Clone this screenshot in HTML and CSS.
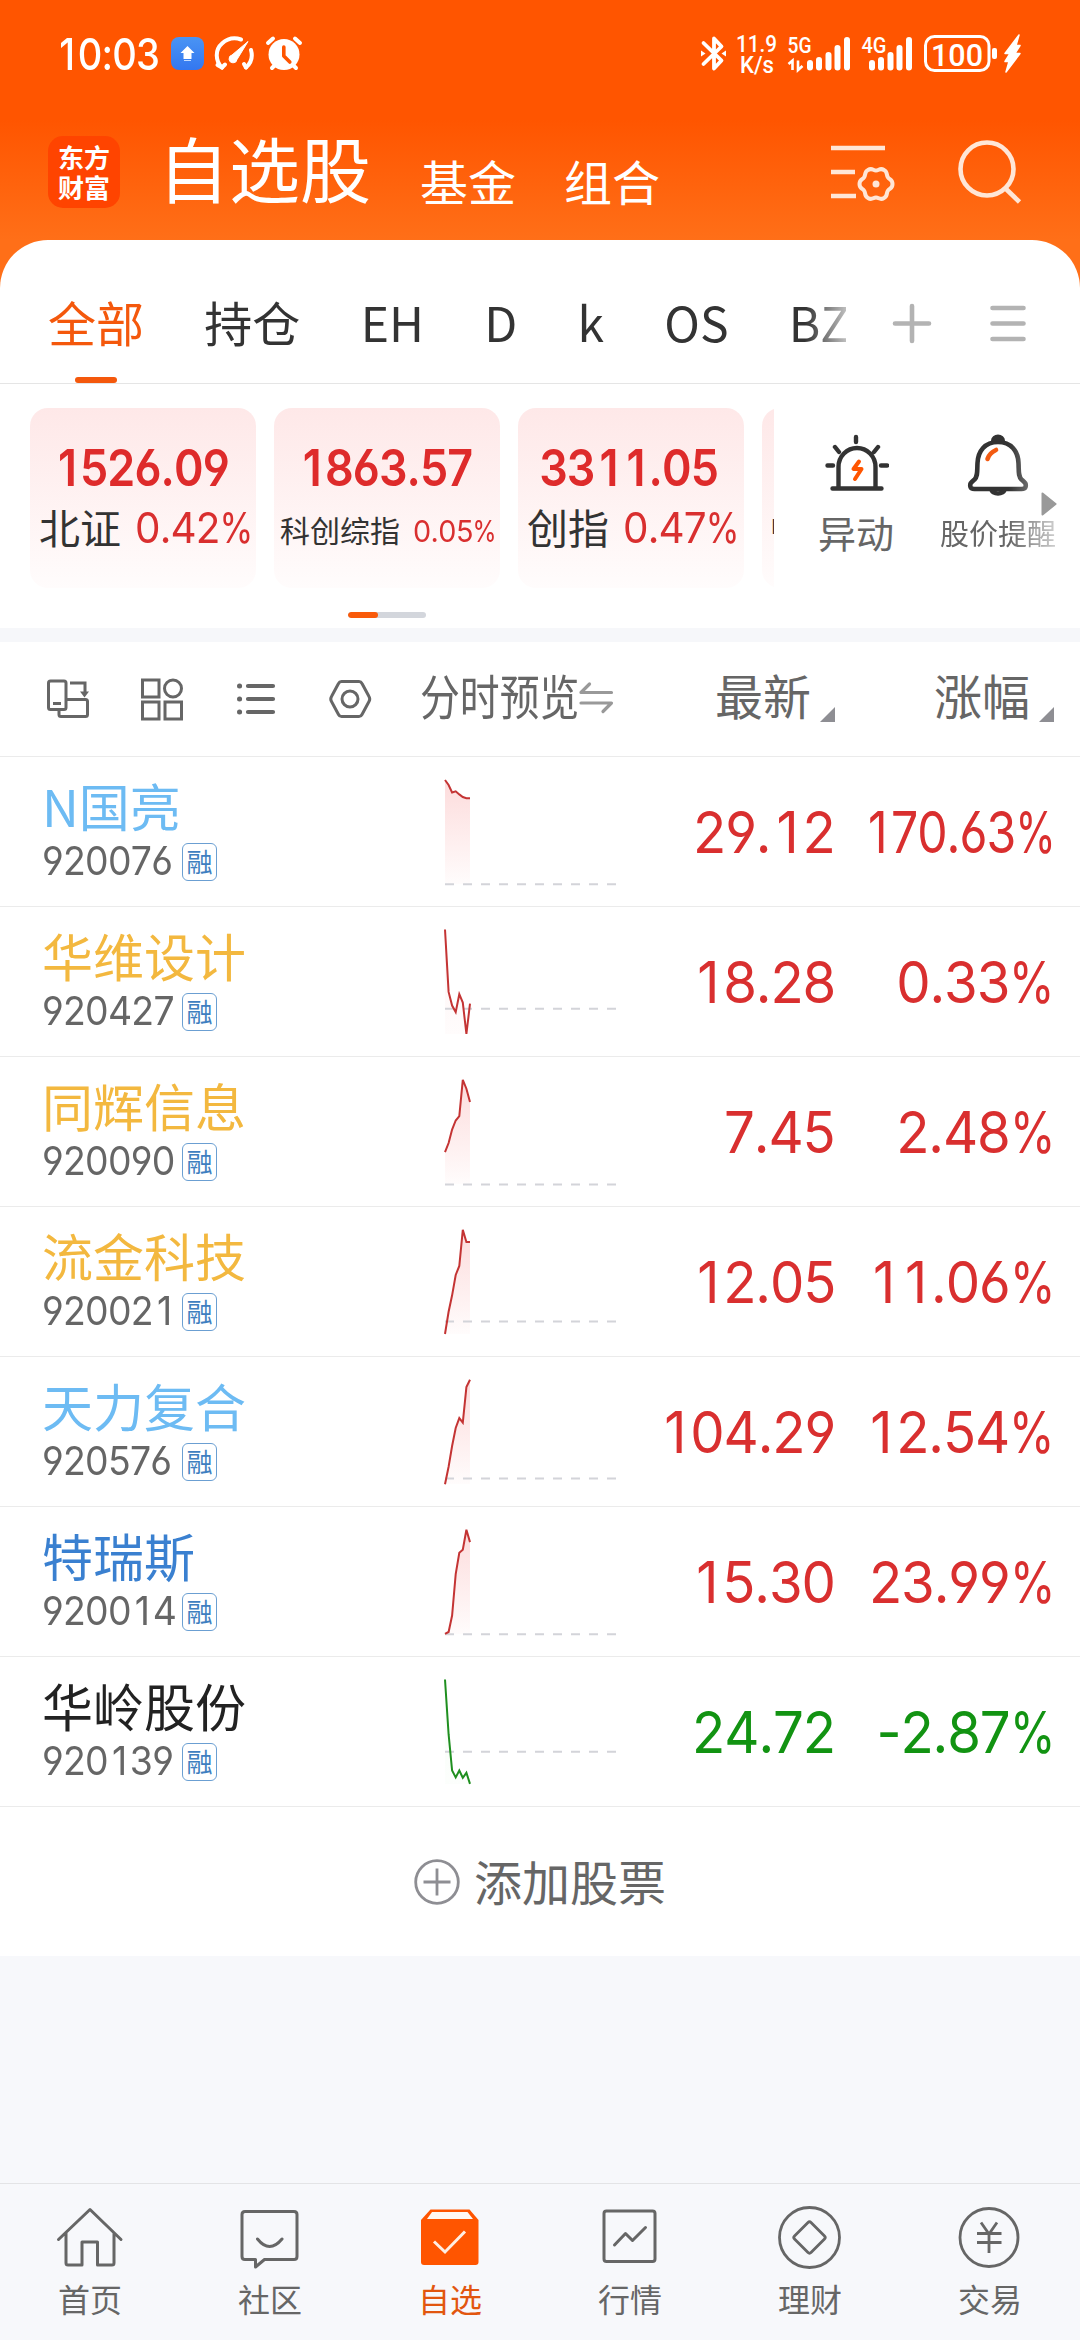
FILE: index.html
```html
<!DOCTYPE html>
<html lang="zh-CN">
<head>
<meta charset="utf-8">
<title>自选股</title>
<link rel="stylesheet" href="styles.css">
</head>
<body>
<div class="app">
  <header class="top">
    <div class="status">
      <span class="clock num">10:03</span>
      <svg class="st-left" width="134" height="38" viewBox="170 34 134 38">
        <defs><linearGradient id="blue" x1="0" y1="0" x2="0" y2="1"><stop offset="0" stop-color="#4a94f4"/><stop offset="1" stop-color="#3377f0"/></linearGradient></defs>
        <rect x="171" y="37" width="33" height="33" rx="8" fill="url(#blue)"/>
        <path d="M187.500 46l7 7h-3v6h-8v-6h-3z" fill="#fff"/><path d="M184 60.500h7" stroke="#c4dcff"/>
        <g fill="none" stroke="#fff" stroke-width="4" stroke-linecap="round"><path d="M222 67.500c-7-7-7-18 0-24 6-5.500 13-6 19-4"/><path d="M251 50c2 7 0 13-5 17.500"/><path d="M217.500 65l4.500 2.500 3-3M244 64l2 3.500"/></g>
        <path d="M248 41.500l-11 18a4 4 0 1 1-5-4.500z" fill="#fff" stroke="#fff" stroke-width="1" stroke-linejoin="round"/>
        <circle cx="284" cy="54.500" r="15.500" fill="#fff"/><path d="M268 43l5-4.500M300 43l-5-4.500M272 68l4-4M296 68l-4-4" stroke="#fff" stroke-width="4" stroke-linecap="round"/><path d="M283.800 47v9l6 6" fill="none" stroke="#ff5500" stroke-width="3.600" stroke-linecap="round" stroke-linejoin="round"/>
      </svg>
      <svg class="st-right" width="324" height="42" viewBox="700 33 324 42">
        <g fill="none" stroke="#fff" stroke-width="3.800" stroke-linecap="round" stroke-linejoin="round"><path d="M703.500 43l18 17.500-7.500 8V38.500l7.500 8-18 17.500"/></g><path d="M701 50.500l4.500 3-4.500 3zM726 50.500l-4.500 3 4.500 3z" fill="#fff"/>
        <g fill="#fff" class="st-text"><text x="736" y="52" font-size="23.500" textLength="41" lengthAdjust="spacingAndGlyphs">11.9</text><text x="740" y="73" font-size="23" textLength="34" lengthAdjust="spacingAndGlyphs">K/s</text><text x="787.500" y="53" font-size="22.500" textLength="24" lengthAdjust="spacingAndGlyphs">5G</text><text x="861.500" y="53" font-size="22.500" textLength="25" lengthAdjust="spacingAndGlyphs">4G</text><text x="931" y="65.500" font-size="32" textLength="52" lengthAdjust="spacingAndGlyphs">100</text></g>
        <path d="M788.500 64l4-3.500V70M798 60.500V70l4.500-4" fill="none" stroke="#fff" stroke-width="2.600"/>
        <g stroke="#fff" stroke-width="6" stroke-linecap="round"><path d="M810 63v4.500M819 60v7.500M828.500 55v12.500M837.500 48v19.500M847 40v27.500M872 63v4.500M881 60v7.500M890.500 55v12.500M899.500 48v19.500M909 40v27.500"/></g>
        <rect x="925.500" y="36.500" width="63.500" height="34" rx="9" fill="none" stroke="#fff" stroke-width="3"/><rect x="992" y="48" width="5" height="11" rx="2" fill="#fff"/>
        <path d="M1019 35l-14 18.500h5l-5 8h4l-3 10.500 14-18.500h-5l5-8h-4z" fill="#fff" stroke="#fff" stroke-width="1.500" stroke-linejoin="round"/>
      </svg>
    </div>
    <nav class="brand">
      <span class="logo"><b>东方</b><b>财富</b></span>
      <span class="h-main">自选股</span><span class="h-sub">基金</span><span class="h-sub">组合</span>
      <svg class="h-icons" width="192" height="70" viewBox="831 138 192 70" fill="none" stroke="#ffe6d6" stroke-width="4.600">
        <path d="M831 148h54M831 172h24M831 196h25"/>
        <path d="M876 170.500 C879 170.500 880 167.500 884 170 C888 172 886 175 888 177.500 C889.500 180 892.500 179 892.500 184 C892.500 189 889.500 188 888 190.500 C886 193 888 196 884 198 C880 200.500 879 197.500 876 197.500 C873 197.500 872 200.500 868 198 C864 196 866 193 864 190.500 C862.500 188 859.500 189 859.500 184 C859.500 179 862.500 180 864 177.500 C866 175 864 172 868 170 C872 167.500 873 170.500 876 170.500Z" stroke-width="4"/><circle cx="876" cy="184" r="3.500" fill="#ffe6d6" stroke="none"/>
        <circle cx="987" cy="169" r="26.500"/><path d="M1005 188l14.500 14"/>
      </svg>
    </nav>
  </header>

  <main class="panel">
    <div class="tabs">
      <div class="tab-list"><span class="tab on">全部</span><span class="tab">持仓</span><span class="tab">EH</span><span class="tab">D</span><span class="tab">k</span><span class="tab">OS</span><span class="tab last">BZ</span></div>
      <svg class="tab-tools" width="136" height="44" viewBox="892 302 136 44" fill="none" stroke="#b3b3b3" stroke-width="4.600" stroke-linecap="round"><path d="M895 323.500h34M912 306v35M992.500 308h31M992.500 323.500h31M992.500 339h31"/></svg>
    </div>

    <div class="quick">
      <div class="cards">
        <div class="card"><div class="val"><span class="num">1526.09</span></div><div class="lab"><span>北证</span><span class="num pct">0.42%</span></div></div>
        <div class="card"><div class="val"><span class="num">1863.57</span></div><div class="lab small"><span>科创综指</span><span class="num pct">0.05%</span></div></div>
        <div class="card"><div class="val"><span class="num">3311.05</span></div><div class="lab"><span>创指</span><span class="num pct">0.47%</span></div></div>
        <div class="card"><div class="val"></div><div class="lab tiny"><span>中证</span></div></div>
      </div>
      <div class="acts">
        <div class="act">
          <svg width="66" height="62" viewBox="822 434 66 62" fill="none" stroke="#333" stroke-width="4.400" stroke-linecap="round"><path d="M837.500 488v-21a18.500 19 0 0 1 37 0v21M831.500 488.500h49M855 437v5M834 447l4 5M877 447l-4 5M826.500 465.500h5.500M880 465.500h6" /><path d="M858 461.500l-5.500 7.500h8l-6.500 10" stroke="#ff5500" stroke-linejoin="round" stroke-width="4"/></svg>
          <span>异动</span>
        </div>
        <div class="act remind">
          <svg width="66" height="62" viewBox="964 434 66 62" fill="none" stroke="#333" stroke-width="4.600" stroke-linejoin="round"><path d="M997 442c-13 0-20 9-20.500 21-.5 8 .5 13-3 16.500-3.500 3-5 4-4 7.500.5 2 2 2 4 2h47c2 0 3.500 0 4-2 1-3.500-.5-4.500-4-7.500-3.500-3.500-2.500-8.500-3-16.500-.500-12-7.500-21-20.500-21z"/><path d="M991 440.500a6 5 0 0 1 12 0z" fill="#333" stroke-width="2"/><path d="M990.500 489c0 6 13 6 13 0"/><path d="M986.500 459c1.500-5 4-7 8.500-9" stroke="#f35b12" stroke-linecap="round"/></svg>
          <span>股价提醒</span>
        </div>
        <svg class="more" width="16" height="26" viewBox="0 0 16 26"><path d="M1.500 2.500v21l13-10.500z" fill="#999" stroke="#999" stroke-width="2" stroke-linejoin="round"/></svg>
      </div>
    </div>
    <div class="pager"><i></i></div>

    <div class="thead">
      <svg class="tools" width="330" height="46" viewBox="44 676 330 46" fill="none" stroke="#666" stroke-width="3">
        <rect x="48.500" y="681" width="17.500" height="28.500" rx="2"/><path d="M53 703.500h8M70 683h15v9M67 699.500h18.500q2 0 2 2v13q0 2-2 2H61q-2 0-2-2v-4"/><path d="M80 691.500h9l-4.500 6z" fill="#666" stroke="none"/>
        <rect x="142.500" y="680" width="16.500" height="17"/><ellipse cx="173" cy="688.500" rx="8.500" ry="8.500"/><rect x="142.500" y="702" width="16.500" height="17"/><rect x="165" y="702" width="16.500" height="17"/>
        <path d="M248 686h25M248 699h25M248 712h25" stroke-width="4.200" stroke-linecap="round"/><path d="M239.500 686h.1M239.500 699h.1M239.500 712h.1" stroke-width="5" stroke-linecap="round"/>
        <path d="M341.500 681.500h17.500q2 0 3 2l7 13q1.500 2.500 0 5l-7 13q-1 2-3 2h-17.500q-2 0-3-2l-7-13q-1.500-2.500 0-5l7-13q1-2 3-2z"/><circle cx="350" cy="699" r="8"/>
      </svg>
      <span class="th-preview">分时预览</span>
      <svg class="swap" width="36" height="34" viewBox="578 681 36 34" fill="none" stroke="#999" stroke-width="3.200" stroke-linecap="round" stroke-linejoin="round"><path d="M611.500 692.500H581l8.500-8.500M581 703h30.500l-8.500 8.500"/></svg>
      <span class="th th-price">最新<i></i></span>
      <span class="th th-pct">涨幅<i></i></span>
    </div>

    <div class="rows" id="rows"></div>

    <div class="add">
      <svg width="46" height="46" viewBox="0 0 46 46" fill="none" stroke="#8e8e93" stroke-width="2.800"><circle cx="23" cy="23" r="21.300"/><path d="M9.500 23h27M23 9.500v27"/></svg>
      <span>添加股票</span>
    </div>
  </main>

  <footer class="nav">
    <a><svg width="68" height="64" viewBox="56 2205 68 64" fill="none" stroke="#666" stroke-width="3" stroke-linecap="round" stroke-linejoin="round"><path d="M58.500 2239.500L90 2209.500l31 30M66 2233v30q0 2 2 2h14v-23h15.500v23H112q2 0 2-2v-30"/></svg>首页</a>
    <a><svg width="68" height="64" viewBox="236 2205 68 64" fill="none" stroke="#666" stroke-width="3" stroke-linecap="round" stroke-linejoin="round"><path d="M245 2211.500h49q3 0 3 3v42q0 3-3 3h-29.500l-9 7.500v-7.500H245q-3 0-3-3v-42q0-3 3-3zM257.500 2239q12 15 24.500 0"/></svg>社区</a>
    <a class="on"><svg width="68" height="64" viewBox="416 2205 68 64" fill="none" stroke-linejoin="round"><path d="M421 2220l9.500-10.500h39l9 10.500v42q0 3-3 3h-51.500q-3 0-3-3z" fill="#ff5500"/><path d="M427 2219l5-7h35.500l5.500 7z" fill="#fff8f2"/><path d="M434 2241.500l11 10.500 20-20.500" stroke="#ffeee2" stroke-width="3" stroke-linejoin="miter"/></svg>自选</a>
    <a><svg width="68" height="64" viewBox="596 2205 68 64" fill="none" stroke="#666" stroke-width="3" stroke-linecap="round" stroke-linejoin="round"><rect x="604" y="2211" width="51" height="50.500" rx="2.500"/><path d="M614.500 2245l11-11.500 7 7 13-13"/></svg>行情</a>
    <a><svg width="68" height="64" viewBox="776 2205 68 64" fill="none" stroke="#666" stroke-width="2.800" stroke-linejoin="round"><circle cx="809.500" cy="2237.500" r="30"/><path d="M808 2222.500q1.500-1.500 3 0l13.500 13.500q1.500 1.500 0 3L811 2252.500q-1.500 1.500-3 0L794.500 2239q-1.500-1.500 0-3z"/></svg>理财</a>
    <a><svg width="68" height="64" viewBox="956 2205 68 64" fill="none" stroke="#666" stroke-width="2.800"><circle cx="989" cy="2237.500" r="29"/><path d="M981 2222.500l8 11.500 8-11.500M989 2233v20M977 2233.500h24.500M977 2242.500h24.500"/></svg>交易</a>
  </footer>
</div>
<script src="app.js"></script>
</body>
</html>
```
FILE: styles.css
```css
* { box-sizing: border-box; }
body { margin: 0; background: #f7f8fb; font-family: "Noto Sans CJK SC", sans-serif; color: #333; }
.app { width: 1080px; height: 2340px; display: flex; flex-direction: column; background: #f7f8fb; overflow: hidden; }
.num { font-family: "Inter", "Roboto", sans-serif; font-feature-settings: "cv03", "cv04"; font-kerning: none; letter-spacing: -.02em; display: inline-block; white-space: nowrap; }
/* the narrow figure 1 takes the same advance as the other figures */
.one { margin: 0 .09em 0 .11em; }
.sign { display: inline-block; transform: scaleX(.85); transform-origin: left; margin-right: -.11em; }

/* header */
.top { height: 290px; margin-bottom: -50px; flex: none; color: #fff; background: linear-gradient(#ff5500 0, #ff5500 120px, #ff6f18 240px); }
.status { height: 108px; padding: 33px 56px 0 55px; display: flex; }
.clock { width: 115px; height: 42px; font-size: 44px; line-height: 43px; font-weight: 500; transform: scaleX(.865); transform-origin: left; }
.st-left { margin-top: 1px; }
.st-right { margin-left: auto; }
.st-text { font-family: "Roboto", sans-serif; font-weight: 500; }
.brand { height: 110px; padding: 28px 57px 0 48px; display: flex; }
.logo { width: 72px; height: 72px; border-radius: 15px; background: #ff4400; display: flex; flex-direction: column; align-items: center; padding-top: 6px; margin-right: 38px; }
.logo b { font-size: 26px; line-height: 30px; font-weight: 700; }
.h-main { font-size: 71px; line-height: 72px; margin: -6px 49px 0 0; font-weight: 400; height: 72px; white-space: nowrap; }
.h-sub { font-size: 48px; line-height: 72px; margin: 8px 48px 0 0; height: 72px; white-space: nowrap; }
.h-icons { margin: 2px 0 0 auto; }

/* white panel */
.panel { flex: none; height: 1716px; background: #fff; border-radius: 48px 48px 0 0; position: relative; }
.tabs { height: 144px; border-bottom: 1px solid #e5e5e5; display: flex; justify-content: space-between; padding-right: 52px; }
.tab-list { width: 846px; overflow: hidden; display: flex; padding-left: 48px; -webkit-mask-image: linear-gradient(90deg, #000 805px, transparent 865px); mask-image: linear-gradient(90deg, #000 805px, transparent 865px); }
.tab { font-size: 48px; line-height: 72px; padding-top: 45px; margin-right: 60.300px; flex: none; }
.tab.on { color: #f4580c; display: flex; flex-direction: column; align-items: center; }
.tab.on::after { content: ""; width: 42px; height: 6px; border-radius: 3px; background: #f4580c; margin-top: 20px; }
.tab-tools { margin-top: 62px; }

.quick { height: 204px; padding-top: 24px; display: flex; }
.cards { width: 774px; padding-left: 30px; display: flex; gap: 18px; overflow: hidden; }
.card { width: 226px; height: 180px; flex: none; border-radius: 18px; background: linear-gradient(#fee8e8, #fffcfc); }
.val { height: 88px; padding-top: 28px; display: flex; justify-content: center; }
.val .num { font-size: 51px; line-height: 64px; font-weight: 600; color: #de2b2b; transform: scaleX(.88); margin-left: -4px; }
.lab { height: 60px; padding: 0 7px 0 9px; display: flex; justify-content: space-between; font-size: 41px; line-height: 60px; white-space: nowrap; }
.lab .pct { color: #d92f2f; font-size: 43px; width: 114px; margin-top: 1px; transform: scaleX(.94); transform-origin: left; }
.lab.small { font-size: 30px; padding: 3px 4px 0 6px; }
.lab.small .pct { font-size: 30px; width: 83px; margin-top: 2px; transform: scaleX(.96); }
.lab.tiny { font-size: 30px; padding-left: 8px; }
.acts { flex: 1; display: flex; position: relative; padding: 26px 23px 0 39px; justify-content: space-between; align-items: flex-start; }
.act { display: flex; flex-direction: column; align-items: center; font-size: 38px; line-height: 56px; color: #666; width: 86px; }
.act span { white-space: nowrap; margin-top: 8px; }
.act.remind { width: 118px; font-size: 29px; -webkit-mask-image: linear-gradient(90deg, #000 70px, rgba(0,0,0,.3) 118px); mask-image: linear-gradient(90deg, #000 70px, rgba(0,0,0,.3) 118px); }
.more { position: absolute; left: 267px; top: 83px; }
.pager { width: 78px; height: 6px; margin: 24px 0 10px 348px; border-radius: 3px; background: #d3d6dc; overflow: hidden; }
.pager i { display: block; width: 30px; height: 6px; border-radius: 3px; background: #f95a0a; }

/* table header */
.thead { height: 129px; border-top: 14px solid #f6f7fa; border-bottom: 1px solid #ebebeb; display: flex; padding-left: 44px; font-size: 48px; line-height: 72px; color: #666; align-items: flex-start; padding-top: 16px; }
.tools { margin: 18px 46px 0 0; flex: none; }
.th-preview { width: 158px; white-space: nowrap; transform: scaleX(.83); transform-origin: left; }
.swap { margin-top: 23px; flex: none; }
.th { display: flex; gap: 9px; justify-content: flex-end; width: 221px; white-space: nowrap; }
.th-pct { width: 219px; }
.th i { width: 15px; height: 15px; margin-top: 49px; background: #8e8e93; clip-path: polygon(100% 0, 100% 100%, 0 100%); }

/* rows */
.row { height: 150px; border-bottom: 1px solid #ebebeb; display: grid; grid-template-columns: 402px 214px 219px 219px; }
.who { padding: 11px 0 0 42px; }
.name { font-size: 51px; line-height: 74px; height: 75px; white-space: nowrap; }
.code { display: flex; height: 38px; color: #666; }
.code .num { width: 140px; font-size: 40px; line-height: 36px; transform: scaleX(.935); transform-origin: left; }
.code em { width: 35px; height: 38px; border: 1.500px solid #6b9fd2; border-radius: 6px; color: #3f7fc0; font-style: normal; font-size: 26px; line-height: 33px; display: flex; justify-content: center; }
.cell { display: flex; justify-content: flex-end; font-size: 58px; line-height: 151px; height: 149px; color: #d92f2f; }
.cell .num { transform: scaleX(.94); transform-origin: right; }
.cell .num.rate { margin-right: -2px; }
.cell .num.tight { transform: scaleX(.83); }
.down { color: #129312; }
.c-new { color: #6dbbf3; }
.c-gold { color: #f3b83f; }
.c-blue { color: #3a80d0; }
.c-plain { color: #222; }
.add { height: 149px; display: flex; justify-content: center; align-items: center; gap: 14px; font-size: 48px; line-height: 72px; color: #666; }
.add span { margin-top: -4px; }

/* bottom navigation */
.nav { margin-top: auto; height: 157px; border-top: 1px solid #e3e4e6; display: grid; grid-template-columns: repeat(6, 180px); }
.nav a { display: flex; flex-direction: column; align-items: center; padding-top: 21px; font-size: 32px; line-height: 50px; color: #666; }
.nav svg { margin-bottom: 4px; }
.nav .on { color: #e2560f; }
```
FILE: app.js
```javascript
const stocks = [
  { name: 'N国亮', code: '920076', tone: 'c-new', price: '29.12', pct: '170.63%', base: 127.3, pts: [23, 28, 35.5, 34.3, 37.4, 40, 41.2, 41.2] },
  { name: '华维设计', code: '920427', tone: 'c-gold', price: '18.28', pct: '0.33%', base: 101.7, pts: [22.5, 84.9, 98.6, 105.1, 87.2, 95.6, 127, 96.7] },
  { name: '同辉信息', code: '920090', tone: 'c-gold', price: '7.45', pct: '2.48%', base: 127.4, pts: [95.2, 86, 72.6, 63.5, 59.2, 22.9, 31.7, 45.1] },
  { name: '流金科技', code: '920021', tone: 'c-gold', price: '12.05', pct: '11.06%', base: 114.4, pts: [127, 104.8, 88.3, 68, 58.9, 22.9, 35.1, 35.1] },
  { name: '天力复合', code: '920576', tone: 'c-new', price: '104.29', pct: '12.54%', base: 121.5, pts: [127.3, 109.7, 89, 71, 61.1, 65.7, 30.1, 22.8] },
  { name: '特瑞斯', code: '920014', tone: 'c-blue', price: '15.30', pct: '23.99%', base: 127.3, pts: [126.9, 125, 108.5, 67.2, 45.8, 42.7, 22.8, 35.1] },
  { name: '华岭股份', code: '920139', tone: 'c-plain', price: '24.72', pct: '-2.87%', base: 94.8, pts: [22.5, 77.2, 113.5, 120.4, 113.5, 120.8, 115.8, 126.9] }
];

function chart(s, i) {
  const down = s.pct[0] === '-';
  const color = down ? '#1f8f1f' : '#c43434';
  const fill = down ? '#c8efc8' : '#fbc4c4';
  const top = down ? 0.15 : s.base < 110 ? 0.2 : 0.6;
  const line = s.pts.map((y, k) => `${(43 + k * 3.57).toFixed(1)},${y}`).join(' ');
  return `<svg width="214" height="149" viewBox="0 0 214 149" fill="none">
    <defs><linearGradient id="g${i}" gradientUnits="userSpaceOnUse" x1="0" y1="23" x2="0" y2="127"><stop offset="0" stop-color="${fill}" stop-opacity="${top}"/><stop offset="1" stop-color="${fill}" stop-opacity=".05"/></linearGradient></defs>
    <polygon points="43,127 ${line} 68,127" fill="url(#g${i})"/>
    <path d="M43 ${s.base}H214" stroke="#d3d4d9" stroke-width="2" stroke-dasharray="9 9"/>
    <polyline points="${line}" stroke="${color}" stroke-width="2"/></svg>`;
}

document.getElementById('rows').innerHTML = stocks.map((s, i) => {
  const dir = s.pct[0] === '-' ? ' down' : '';
  const tight = s.pct.length > 6 ? ' tight' : '';
  return `<div class="row">
    <div class="who"><div class="name ${s.tone}">${s.name}</div><div class="code"><span class="num">${s.code}</span><em>融</em></div></div>
    ${chart(s, i)}
    <div class="cell${dir}"><span class="num">${s.price}</span></div>
    <div class="cell${dir}"><span class="num rate${tight}">${s.pct}</span></div>
  </div>`;
}).join('');

document.querySelectorAll('.num').forEach(el => {
  el.innerHTML = el.textContent
    .replace(/1/g, '<span class="one">1</span>')
    .replace('%', '<span class="sign">%</span>');
});
```
